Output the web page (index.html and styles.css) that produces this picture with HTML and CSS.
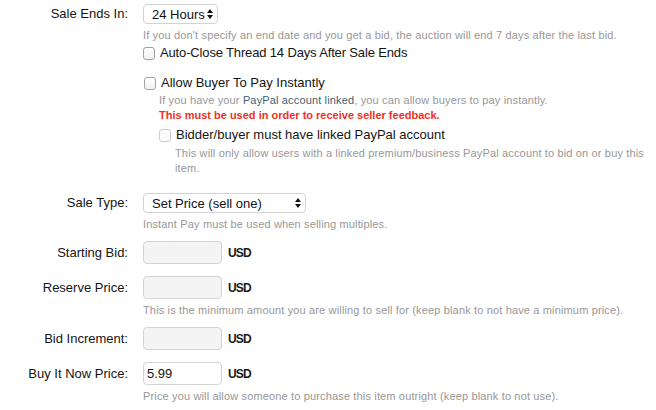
FILE: index.html
```html
<!DOCTYPE html>
<html lang="en">
<head>
  <meta charset="UTF-8" />
  <title>Sale Options</title>
  <link rel="stylesheet" href="styles.css">
</head>
<body>

  <form class="form">

    <!-- Fim da venda -->
    <div class="row">
      <label class="label label-select">Sale Ends In:</label>
      <div class="field">
        <span class="select-wrap select-short">
          <select class="select"><option>24 Hours</option></select>
          <svg class="arrows" width="6" height="10" viewBox="0 0 6 10"><path d="M0 4 L3 0 L6 4 Z M0 6 L3 10 L6 6 Z" fill="#111"/></svg>
        </span>
        <p class="hint">If you don't specify an end date and you get a bid, the auction will end 7 days after the last bid.</p>
        <label class="check check-top"><input type="checkbox" class="box"> Auto-Close Thread 14 Days After Sale Ends</label>
      </div>
    </div>

    <!-- Pagamento -->
    <div class="row row-pay">
      <span class="label"></span>
      <div class="field">
        <label class="check check-pay"><input type="checkbox" class="box"> Allow Buyer To Pay Instantly</label>
        <div class="sub">
          <p class="hint hint-tight">If you have your <a class="link" href="#">PayPal account linked</a>, you can allow buyers to pay instantly.</p>
          <p class="hint hint-tight warn">This must be used in order to receive seller feedback.</p>
          <label class="check check-sub disabled"><input type="checkbox" class="box" disabled> Bidder/buyer must have linked PayPal account</label>
          <p class="hint hint-tight sub">This will only allow users with a linked premium/business PayPal account to bid on or buy this item.</p>
        </div>
      </div>
    </div>

    <!-- Tipo -->
    <div class="row row-hint">
      <label class="label label-select">Sale Type:</label>
      <div class="field">
        <span class="select-wrap select-long">
          <select class="select"><option>Set Price (sell one)</option></select>
          <svg class="arrows" width="6" height="10" viewBox="0 0 6 10"><path d="M0 4 L3 0 L6 4 Z M0 6 L3 10 L6 6 Z" fill="#111"/></svg>
        </span>
        <p class="hint hint-select">Instant Pay must be used when selling multiples.</p>
      </div>
    </div>

    <!-- Precos -->
    <div class="row">
      <label class="label label-input">Starting Bid:</label>
      <div class="field">
        <div class="price"><input type="text" class="input" disabled> <span class="currency">USD</span></div>
      </div>
    </div>

    <div class="row row-hint">
      <label class="label label-input">Reserve Price:</label>
      <div class="field">
        <div class="price"><input type="text" class="input" disabled> <span class="currency">USD</span></div>
        <p class="hint">This is the minimum amount you are willing to sell for (keep blank to not have a minimum price).</p>
      </div>
    </div>

    <div class="row">
      <label class="label label-input">Bid Increment:</label>
      <div class="field">
        <div class="price"><input type="text" class="input" disabled> <span class="currency">USD</span></div>
      </div>
    </div>

    <div class="row">
      <label class="label label-input">Buy It Now Price:</label>
      <div class="field">
        <div class="price"><input type="text" class="input" value="5.99"> <span class="currency">USD</span></div>
        <p class="hint hint-last">Price you will allow someone to purchase this item outright (keep blank to not use).</p>
      </div>
    </div>

  </form>

</body>
</html>
```

FILE: styles.css
```css
body {
  margin: 0;
  padding: 4px 6px 0 0;
  font-family: 'Liberation Sans', Arial, sans-serif;
  font-size: 13px;
  color: #141414;
  background: #ffffff;
}

.form {
  margin: 0;
}

.row {
  display: grid;
  grid-template-columns: 128px 1fr;
  column-gap: 15px;
  margin-bottom: 12px;
}

.row-pay {
  margin-bottom: 17px;
}

.row-hint {
  margin-bottom: 9px;
}

.label {
  text-align: right;
}

.label-select {
  line-height: 20px;
}

.label-input {
  line-height: 23px;
}

.field {
  min-width: 0;
}

/* selects */
.select-wrap {
  position: relative;
  display: inline-block;
  vertical-align: top;
}

.select {
  appearance: none;
  -webkit-appearance: none;
  display: block;
  height: 20px;
  margin: 0;
  padding: 0 0 0 8px;
  border: 1px solid #d2d2d2;
  border-radius: 4px;
  background: #ffffff;
  font-family: inherit;
  font-size: 13px;
  color: #111;
}

.select-short .select {
  width: 75px;
}

.select-long .select {
  width: 163px;
}

.arrows {
  position: absolute;
  top: 5px;
  right: 5px;
  pointer-events: none;
}

/* textos de ajuda */
.hint {
  margin: 4px 0 0;
  font-size: 11px;
  line-height: 15px;
  letter-spacing: 0.15px;
  color: #979797;
}

.hint-tight {
  margin-top: 0;
}

.hint-select {
  margin-top: 4px;
}

.hint-last {
  margin-top: 4px;
}

.hint.sub {
  margin-top: 2px;
  padding-left: 16px;
}

.link {
  color: #3e6272;
  text-decoration: none;
}

.warn {
  color: #f0311d;
  font-weight: bold;
  letter-spacing: 0;
}

/* checkboxes */
.check {
  display: flex;
  align-items: center;
  line-height: 18px;
}

.check-top {
  margin-top: 1px;
  letter-spacing: -0.15px;
}

.check-pay {
  padding-left: 1px;
}

.check-sub {
  margin-top: 3px;
}

.box {
  appearance: none;
  -webkit-appearance: none;
  width: 12px;
  height: 13px;
  margin: 0 5px 0 0;
  border: 1px solid #a2a2a2;
  border-radius: 3px;
  background: linear-gradient(to bottom, #ffffff, #f2f2f2);
}

.disabled .box {
  border-color: #cdcdcd;
  background: #fbfbfb;
}

.sub {
  padding-left: 16px;
}

.field > .sub {
  margin-top: 1px;
}

/* precos */
.price {
  display: flex;
  align-items: center;
  gap: 6px;
}

.input {
  box-sizing: border-box;
  width: 79px;
  height: 23px;
  margin: 0;
  padding: 0 3px;
  border: 1px solid #d3d3d3;
  border-radius: 4px;
  background: #f4f4f4;
  font-family: inherit;
  font-size: 13px;
  color: #111;
}

.input:not([disabled]) {
  background: #ffffff;
}

.currency {
  font-size: 12px;
  font-weight: bold;
  letter-spacing: -0.8px;
  color: #1a1a1a;
}
```
